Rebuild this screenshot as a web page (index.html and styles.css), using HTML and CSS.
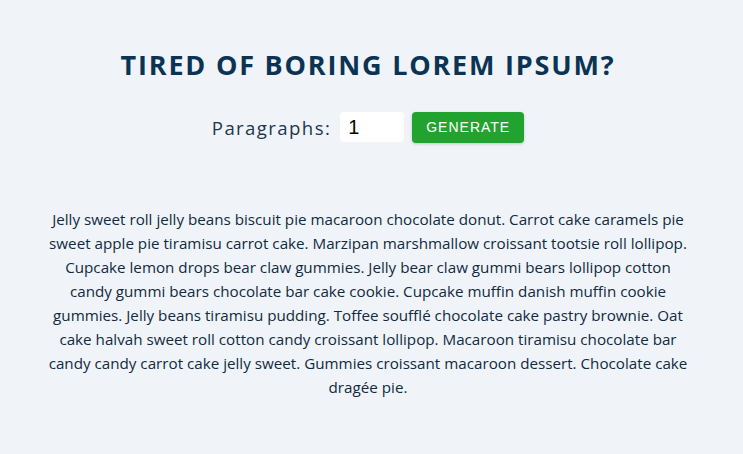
FILE: index.html
```html
<!DOCTYPE html>
<html>
<head>
<meta charset="utf-8">
<link rel="stylesheet" href="styles.css">
</head>
<body>
<section class="section-center">
  <h3 class="title">tired of boring lorem ipsum?</h3>
  <form class="lorem-form">
    <label class="label" for="amount">paragraphs:</label>
    <input class="amount" type="number" id="amount" value="1">
    <button class="btn" type="button">generate</button>
  </form>
  <article class="lorem-text">
    <p>Jelly sweet roll jelly beans biscuit pie macaroon chocolate donut. Carrot cake caramels pie sweet apple pie tiramisu carrot cake. Marzipan marshmallow croissant tootsie roll lollipop. Cupcake lemon drops bear claw gummies. Jelly bear claw gummi bears lollipop cotton candy gummi bears chocolate bar cake cookie. Cupcake muffin danish muffin cookie gummies. Jelly beans tiramisu pudding. Toffee soufflé chocolate cake pastry brownie. Oat cake halvah sweet roll cotton candy croissant lollipop. Macaroon tiramisu chocolate bar candy candy carrot cake jelly sweet. Gummies croissant macaroon dessert. Chocolate cake dragée pie.</p>
  </article>
</section>
</body>
</html>
```
FILE: styles.css
```css
* { box-sizing: border-box; margin: 0; padding: 0; }
body {
  background: #f0f4f8;
  font-family: "Open Sans", sans-serif;
  color: #102a42;
  padding-right: 7px;
}
.section-center {
  width: 645px;
  margin: 0 auto;
  padding-top: 48px;
  text-align: center;
}
.title {
  font-size: 27px;
  font-weight: 700;
  letter-spacing: 1.8px;
  text-transform: uppercase;
  color: #0b3354;
  line-height: 1.25;
}
.lorem-form {
  display: flex;
  justify-content: center;
  align-items: center;
  margin-top: 30px;
}
.label {
  font-size: 18.6px;
  letter-spacing: 1.4px;
  text-transform: capitalize;
  color: #1d3650;
  margin-right: 9px;
}
.amount {
  width: 64px;
  height: 30px;
  border: none;
  border-radius: 4px;
  background: #fff;
  padding: 0 8px;
  font-size: 20px;
  font-family: "Liberation Sans", Arial, sans-serif;
  color: #000;
  -moz-appearance: textfield;
}
.amount::-webkit-inner-spin-button,
.amount::-webkit-outer-spin-button { -webkit-appearance: none; margin: 0; }
.btn {
  margin-left: 8px;
  height: 31px;
  padding: 0 14px;
  border: none;
  border-radius: 4px;
  background: #22a22f;
  color: #fff;
  font-family: "Liberation Sans", Arial, sans-serif;
  font-size: 14px;
  letter-spacing: 1px;
  text-transform: uppercase;
  box-shadow: 0 1px 3px rgba(0,0,0,0.2);
}
.lorem-text {
  margin-top: 64px;
}
.lorem-text p {
  font-size: 15.2px;
  line-height: 24px;
  color: #102a42;
}
```
